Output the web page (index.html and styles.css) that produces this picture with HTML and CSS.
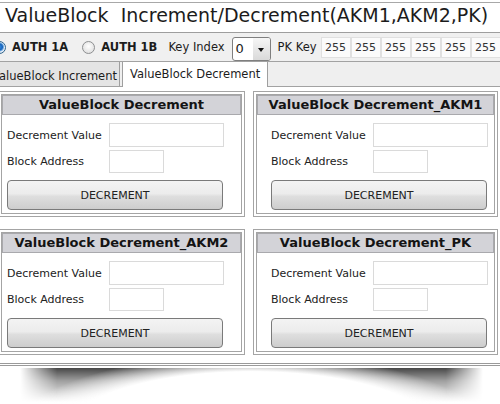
FILE: index.html
```html
<!DOCTYPE html>
<html>
<head>
    <title>ValueBlock Increment/Decrement</title>
    <link rel="stylesheet" href="styles.css">
</head>
<body>
    <div class="app">
        <div class="titlebar">ValueBlock  Increment/Decrement(AKM1,AKM2,PK)</div>

        <div class="toolbar">
            <label class="auth first"><span class="radio on"></span>AUTH 1A</label>
            <label class="auth second"><span class="radio"></span>AUTH 1B</label>
            <span class="lbl key-index">Key Index</span>
            <div class="select"><span class="val">0</span><span class="arrow"></span></div>
            <span class="lbl pk">PK Key</span>
            <div class="keys">
                <span class="key">255</span>
                <span class="key">255</span>
                <span class="key">255</span>
                <span class="key">255</span>
                <span class="key">255</span>
                <span class="key">255</span>
            </div>
        </div>

        <div class="tabs">
            <div class="tab">ValueBlock Increment</div>
            <div class="tab active">ValueBlock Decrement</div>
        </div>

        <div class="panels">
            <div class="panel">
                <div class="box">
                    <div class="head">ValueBlock Decrement</div>
                    <div class="rows">
                        <div class="row"><span class="label">Decrement Value</span><span class="input wide"></span></div>
                        <div class="row small"><span class="label">Block Address</span><span class="input short"></span></div>
                        <button class="btn">DECREMENT</button>
                    </div>
                </div>
            </div>
            <div class="panel">
                <div class="box">
                    <div class="head">ValueBlock Decrement_AKM1</div>
                    <div class="rows shift">
                        <div class="row"><span class="label">Decrement Value</span><span class="input wide"></span></div>
                        <div class="row small"><span class="label">Block Address</span><span class="input short"></span></div>
                        <button class="btn">DECREMENT</button>
                    </div>
                </div>
            </div>
            <div class="panel">
                <div class="box">
                    <div class="head">ValueBlock Decrement_AKM2</div>
                    <div class="rows">
                        <div class="row"><span class="label">Decrement Value</span><span class="input wide"></span></div>
                        <div class="row small"><span class="label">Block Address</span><span class="input short"></span></div>
                        <button class="btn">DECREMENT</button>
                    </div>
                </div>
            </div>
            <div class="panel">
                <div class="box">
                    <div class="head">ValueBlock Decrement_PK</div>
                    <div class="rows shift">
                        <div class="row"><span class="label">Decrement Value</span><span class="input wide"></span></div>
                        <div class="row small"><span class="label">Block Address</span><span class="input short"></span></div>
                        <button class="btn">DECREMENT</button>
                    </div>
                </div>
            </div>
        </div>
    </div>
    <div class="shadow"></div>
</body>
</html>
```
FILE: styles.css
```css
body {
    margin: 0;
    width: 500px;
    height: 404px;
    overflow: hidden;
    background: #fff;
    color: #1c1c1c;
    font-family: "DejaVu Sans", Verdana, sans-serif;
}
.app {
    margin: 2px 0 0 -2px;
    width: 504px;
    border-top: 1px solid #a8a8a8;
    border-bottom: 3px double #9a9a9a;
}
.titlebar {
    height: 29px;
    padding-left: 7px;
    font-size: 19px;
    line-height: 25px;
    white-space: pre;
    border-bottom: 1px solid #9e9e9e;
}

/* toolbar */
.toolbar {
    display: flex;
    align-items: center;
    height: 28px;
    background: #f0f0f0;
    border-bottom: 1px solid #a2a2a2;
    font-size: 11.5px;
}
.auth {
    display: flex;
    align-items: center;
    font-weight: bold;
}
.auth.first {
    margin-left: -5px;
}
.auth.second {
    margin-left: 14px;
}
.radio {
    width: 11px;
    height: 11px;
    margin-right: 6px;
    border: 1px solid #8d8f91;
    border-radius: 50%;
    background: radial-gradient(circle at 50% 40%, #ffffff, #d8d8d8);
}
.radio.on {
    border-color: #2c628b;
    background: radial-gradient(circle at 50% 45%, #2a8ce8 0, #1a63b8 3px, #6fa9e2 4px, #e6eef7 5px);
}
.key-index {
    margin-left: 11px;
}
.select {
    display: flex;
    width: 37px;
    height: 22px;
    margin: 3px 0 0 7px;
    border: 1px solid #7f7f7f;
    border-radius: 3px;
    background: #fff;
    overflow: hidden;
}
.select .val {
    flex: 1;
    padding-left: 3px;
    font-size: 13px;
    line-height: 22px;
}
.select .arrow {
    display: flex;
    align-items: center;
    justify-content: center;
    width: 17px;
    background: linear-gradient(#f6f6f6, #d9d9d9);
}
.select .arrow::after {
    content: '';
    border-left: 3px solid transparent;
    border-right: 3px solid transparent;
    border-top: 4px solid #111;
    margin-top: 2px;
}
.pk {
    margin-left: 7px;
}
.keys {
    display: flex;
    margin-left: 4px;
}
.key {
    width: 28px;
    height: 19px;
    border: 1px solid #e0e0e0;
    background: #fbfbfb;
    color: #333;
    font-size: 11px;
    line-height: 19px;
    text-align: center;
}

/* tabs */
.tabs {
    display: flex;
    height: 24px;
    background: #efefef;
    border-bottom: 1px solid #a2a2a2;
    font-size: 11.5px;
}
.tab {
    white-space: nowrap;
}
.tab:first-child {
    width: 127px;
    margin-left: -6px;
    padding-top: 4px;
    line-height: 20px;
    background: #e4e4e4;
    border-right: 1px solid #9f9f9f;
    overflow: hidden;
}
.tab.active {
    box-sizing: border-box;
    width: 146px;
    height: 25px;
    margin-left: 2px;
    padding: 2px 0 0 7px;
    line-height: 21px;
    background: #fff;
    border-left: 1px solid #9f9f9f;
    border-right: 1px solid #9f9f9f;
}

/* group boxes */
.panels {
    display: grid;
    grid-template-columns: 247px 245px;
    column-gap: 8px;
    row-gap: 12px;
    padding: 4px 0 8px;
}
.panel {
    height: 126px;
    box-sizing: border-box;
    padding: 2px;
    border: 1px solid #a4a4a4;
}
.box {
    height: 100%;
    box-sizing: border-box;
    border: 1px solid #a4a4a4;
}
.head {
    height: 18px;
    border: 1px solid #a9a9ad;
    background: #d3d3d8;
    font-size: 13px;
    font-weight: bold;
    line-height: 18px;
    text-align: center;
    color: #141414;
}
.rows {
    display: flex;
    flex-direction: column;
    gap: 3px;
    padding: 8px 0 0 5px;
}
.rows.shift {
    padding-left: 14px;
}
.row {
    display: flex;
    align-items: center;
    height: 24px;
    font-size: 11px;
}
.row.small {
    height: 23px;
}
.label {
    width: 102px;
    color: #222;
}
.input {
    height: 100%;
    box-sizing: border-box;
    border: 1px solid #dadada;
    background: #fff;
}
.input.wide {
    width: 115px;
}
.input.short {
    width: 55px;
}
.btn {
    width: 216px;
    height: 30px;
    margin-top: 4px;
    padding: 0;
    border: 1px solid #7a7a7a;
    border-radius: 4px;
    background: linear-gradient(#f3f3f3 0%, #ececec 45%, #dedede 55%, #cdcdcd 100%);
    color: #222;
    font-family: "DejaVu Sans", Verdana, sans-serif;
    font-size: 11px;
}

/* curved drop shadow under the window */
.shadow {
    width: 463px;
    height: 36px;
    margin: 2px 0 0 20px;
    background:
        radial-gradient(ellipse 240px 80px at 50% 66px, #fff 78%, rgba(255, 255, 255, 0) 100%),
        linear-gradient(rgba(0, 0, 0, 0.72), rgba(0, 0, 0, 0.38) 35%, rgba(0, 0, 0, 0) 95%);
    -webkit-mask-image: linear-gradient(to right, transparent, #000 8%, #000 92%, transparent);
    mask-image: linear-gradient(to right, transparent, #000 8%, #000 92%, transparent);
}
```
